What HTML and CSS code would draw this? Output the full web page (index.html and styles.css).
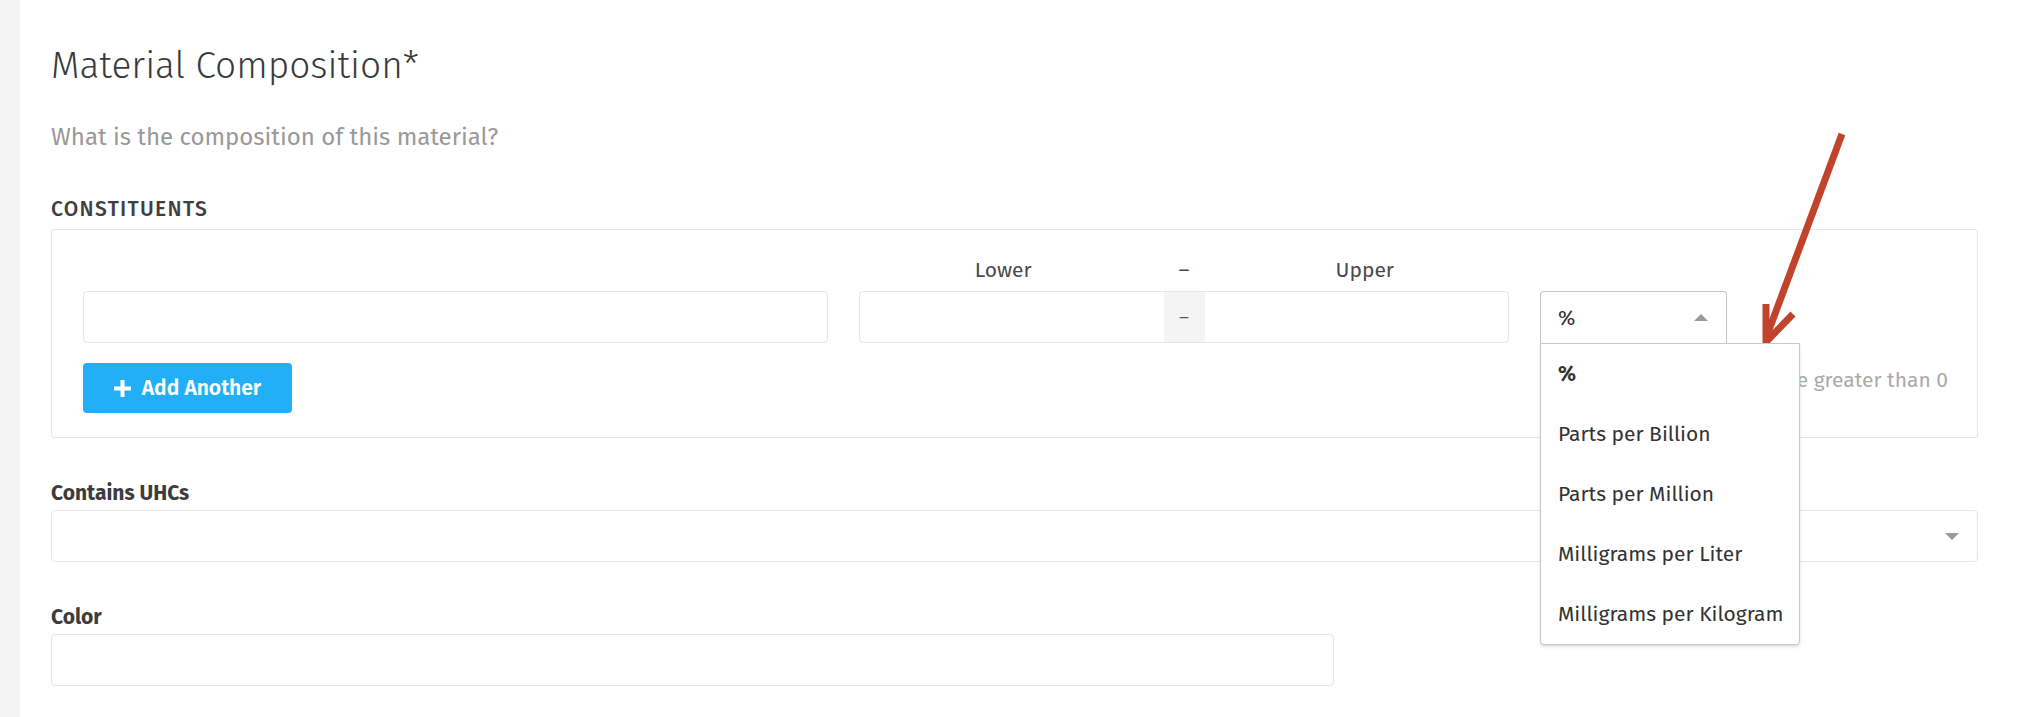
FILE: index.html
```html
<!DOCTYPE html>
<html lang="en">
<head>
	<meta charset="UTF-8">
	<meta name="viewport" content="width=device-width, initial-scale=1.0">
	<title>Material Composition</title>
<link rel="stylesheet" href="styles.css">
</head>
<body>

<div class="page">
	<div class="sideBar"></div>

	<div class="main">
		<h1 class="title">Material Composition*</h1>
		<p class="subTitle">What is the composition of this material?</p>

		<h2 class="groupName">CONSTITUENTS</h2>
		<div class="groupBox">
			<div class="headRow">
				<div class="colName"></div>
				<div class="colRange">
					<span class="rangeLabel lowLabel">Lower</span>
					<span class="rangeDash">–</span>
					<span class="rangeLabel upLabel">Upper</span>
				</div>
			</div>

			<div class="inputRow">
				<input class="textBox nameBox" type="text">
				<div class="rangeBox">
					<input class="rangeInput" type="text">
					<span class="rangeAddon">–</span>
					<input class="rangeInput" type="text">
				</div>
				<div class="unitWrap">
					<div class="unitSelect">
						<span>%</span>
						<span class="caretUp"></span>
					</div>
					<!-- 열린 드롭다운 -->
					<ul class="unitMenu">
						<li class="picked">%</li>
						<li>Parts per Billion</li>
						<li>Parts per Million</li>
						<li>Milligrams per Liter</li>
						<li>Milligrams per Kilogram</li>
					</ul>
				</div>
			</div>

			<div class="btnRow">
				<button class="addBtn">
					<svg class="plus" width="17" height="17" viewBox="0 0 17 17">
						<rect x="6.5" y="0" width="4" height="17" fill="#fff"/>
						<rect x="0" y="6.5" width="17" height="4" fill="#fff"/>
					</svg>
					Add Another
				</button>
				<span class="errText">Upper must be greater than 0</span>
			</div>
		</div>

		<label class="fieldName">Contains UHCs</label>
		<div class="textBox selectBox">
			<span class="caretDown"></span>
		</div>

		<label class="fieldName">Color</label>
		<input class="textBox colorBox" type="text">
	</div>

	<!-- 빨간 화살표 -->
	<svg class="arrow" width="120" height="240" viewBox="0 0 120 240">
		<line x1="104" y1="2" x2="28" y2="206" stroke="#c2432b" stroke-width="7"/>
		<polyline points="28,172 28,210 55,182" fill="none" stroke="#c2432b" stroke-width="7" stroke-linejoin="miter"/>
	</svg>
</div>

</body>
</html>
```

FILE: styles.css
```css
/* 기본 */
*{
	margin: 0;
	padding: 0;
	box-sizing: border-box;
}

body{
	font-family: "Fira Sans", "Open Sans", "Noto Sans", sans-serif;
	color: #333;
	background: #fff;
}

.page{
	display: flex;
	position: relative;
	min-height: 717px;
}

.sideBar{
	width: 20px;
	background: #f4f4f4;
	flex-shrink: 0;
}

.main{
	flex: 1;
	padding: 42px 58px 0 31px;
}

/* 제목 */
.title{
	font-size: 37px;
	font-weight: 300;
	color: #3a3a3a;
	line-height: 48px;
}

.subTitle{
	font-size: 24px;
	color: #999;
	margin-top: 31px;
	line-height: 32px;
}

.groupName{
	font-size: 21px;
	font-weight: 500;
	letter-spacing: 1.3px;
	color: #3f3f3f;
	margin-top: 43px;
	line-height: 26px;
}

/* 구성 박스 */
.groupBox{
	border: 1px solid #e6e6e6;
	border-radius: 3px;
	margin-top: 7px;
	padding: 28px 29px 24px 31px;
	height: 209px;
}

.headRow{
	display: flex;
	height: 33px;
}

.colName{
	width: 745px;
	margin-right: 31px;
}

.colRange{
	width: 650px;
	display: flex;
	font-size: 21px;
	color: #4a4a4a;
	line-height: 24px;
}

.rangeLabel{
	flex: 1;
	text-align: center;
}

.lowLabel{
	padding-right: 16px;
}

.upLabel{
	padding-left: 16px;
}

.rangeDash{
	width: 41px;
	text-align: center;
}

.inputRow{
	display: flex;
	align-items: flex-start;
}

.textBox{
	border: 1px solid #e6e6e6;
	border-radius: 4px;
	height: 52px;
	background: #fff;
	display: block;
}

.nameBox{
	width: 745px;
	margin-right: 31px;
}

.rangeBox{
	width: 650px;
	height: 52px;
	display: flex;
	border: 1px solid #e6e6e6;
	border-radius: 4px;
	margin-right: 31px;
}

.rangeInput{
	flex: 1;
	border: none;
	background: transparent;
}

.rangeAddon{
	width: 41px;
	background: #f4f4f4;
	text-align: center;
	line-height: 50px;
	font-size: 19px;
	color: #555;
}

/* 단위 선택 */
.unitWrap{
	position: relative;
	width: 187px;
}

.unitSelect{
	height: 53px;
	border: 1px solid #c4c4c4;
	border-bottom-color: #e4e4e4;
	border-radius: 4px 4px 0 0;
	display: flex;
	align-items: center;
	justify-content: space-between;
	padding: 0 18px 0 17px;
	font-size: 21px;
	color: #333;
}

.caretUp{
	width: 0;
	height: 0;
	border-left: 7px solid transparent;
	border-right: 7px solid transparent;
	border-bottom: 7px solid #999;
}

.unitMenu{
	position: absolute;
	top: 52px;
	left: 0;
	width: 260px;
	list-style: none;
	background: #fff;
	border: 1px solid #c8c8c8;
	border-radius: 0 0 4px 4px;
	box-shadow: 0 2px 3px rgba(0, 0, 0, 0.12);
	z-index: 5;
}

.unitMenu li{
	height: 60px;
	line-height: 60px;
	padding-left: 17px;
	font-size: 21px;
	color: #333;
}

.unitMenu .picked{
	font-weight: 700;
}

/* 버튼 줄 */
.btnRow{
	display: flex;
	justify-content: space-between;
	align-items: flex-start;
	margin-top: 19px;
}

.addBtn{
	width: 209px;
	height: 50px;
	border: none;
	border-radius: 4px;
	background: #22aff8;
	color: #fff;
	font-family: inherit;
	font-size: 21px;
	font-weight: 600;
	cursor: pointer;
	display: flex;
	align-items: center;
	justify-content: center;
}

.plus{
	margin-right: 11px;
}

.errText{
	font-size: 21px;
	line-height: 28px;
	color: #aaa;
	margin-top: 3px;
}

/* 아래 필드 */
.fieldName{
	display: block;
	font-size: 21px;
	font-weight: 700;
	color: #3c3c3c;
	margin-top: 40px;
	line-height: 30px;
	margin-bottom: 2px;
}

.selectBox{
	position: relative;
	width: 100%;
}

.caretDown{
	position: absolute;
	right: 18px;
	top: 22px;
	width: 0;
	height: 0;
	border-left: 7px solid transparent;
	border-right: 7px solid transparent;
	border-top: 7px solid #999;
}

.colorBox{
	width: 1283px;
	margin-bottom: 0;
}

.arrow{
	position: absolute;
	left: 1738px;
	top: 132px;
}
```
